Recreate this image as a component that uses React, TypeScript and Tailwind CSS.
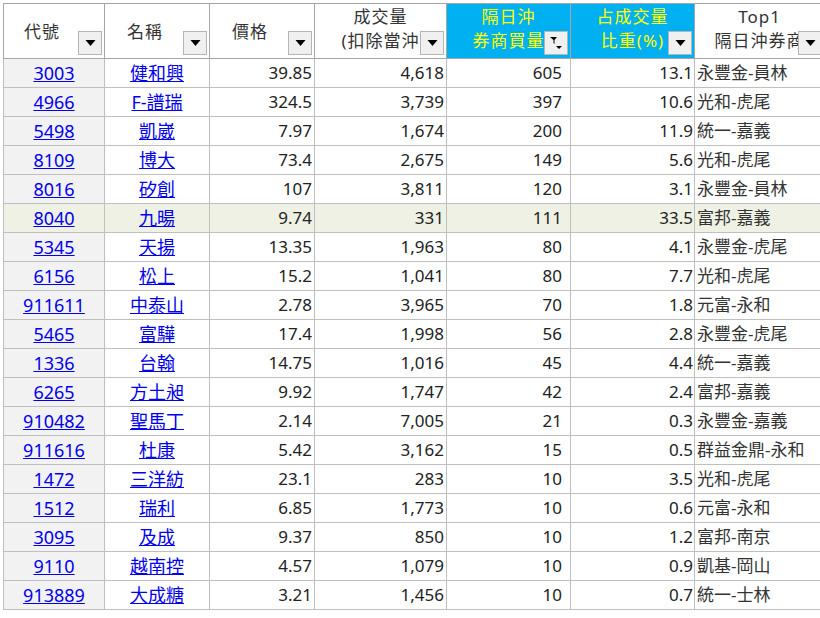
const rows: [string,string,string,string,string,string,string][] = [
["3003","健和興","39.85","4,618","605","13.1","永豐金-員林"],
["4966","F-譜瑞","324.5","3,739","397","10.6","光和-虎尾"],
["5498","凱崴","7.97","1,674","200","11.9","統一-嘉義"],
["8109","博大","73.4","2,675","149","5.6","光和-虎尾"],
["8016","矽創","107","3,811","120","3.1","永豐金-員林"],
["8040","九暘","9.74","331","111","33.5","富邦-嘉義"],
["5345","天揚","13.35","1,963","80","4.1","永豐金-虎尾"],
["6156","松上","15.2","1,041","80","7.7","光和-虎尾"],
["911611","中泰山","2.78","3,965","70","1.8","元富-永和"],
["5465","富驊","17.4","1,998","56","2.8","永豐金-虎尾"],
["1336","台翰","14.75","1,016","45","4.4","統一-嘉義"],
["6265","方土昶","9.92","1,747","42","2.4","富邦-嘉義"],
["910482","聖馬丁","2.14","7,005","21","0.3","永豐金-嘉義"],
["911616","杜康","5.42","3,162","15","0.5","群益金鼎-永和"],
["1472","三洋紡","23.1","283","10","3.5","光和-虎尾"],
["1512","瑞利","6.85","1,773","10","0.6","元富-永和"],
["3095","及成","9.37","850","10","1.2","富邦-南京"],
["9110","越南控","4.57","1,079","10","0.9","凱基-岡山"],
["913889","大成糖","3.21","1,456","10","0.7","統一-士林"],
];

function Drop({ filter }: { filter?: boolean }) {
  return (
    <div className="absolute right-[2px] bottom-[3px] w-[24px] h-[24px] bg-[#f0f0f0] border border-[#b5b5b5] flex items-center justify-center">
      {filter ? (
        <svg width="16" height="16" viewBox="0 0 16 16">
          <path d="M2 2h7L6.5 5v4l-1-1V5z" fill="#000" />
          <path d="M8 11h6l-3 3z" fill="#000" />
        </svg>
      ) : (
        <svg width="13" height="8" viewBox="0 0 12 8"><path d="M1 1h10L6 7z" fill="#000" /></svg>
      )}
    </div>
  );
}

export default function App() {
  const widths = [101, 105, 105, 132, 124, 124, 130];
  const headers: [string, string, boolean, boolean][] = [
    ["代號", "", false, false],
    ["名稱", "", false, false],
    ["價格", "", false, false],
    ["成交量", "(扣除當沖", false, false],
    ["隔日沖", "券商買量", true, true],
    ["占成交量", "比重(%)", true, false],
    ["Top1", "隔日沖券商", false, false],
  ];
  return (
    <div className="w-[820px] h-[618px] bg-white overflow-hidden pt-[3px] pl-[3px]" style={{ fontFamily: '"Noto Sans","Noto Sans CJK TC",sans-serif' }}>
      <table className="border-collapse table-fixed text-[17px] text-[#222]" style={{ width: widths.reduce((a, b) => a + b, 0) }}>
        <colgroup>{widths.map((w, i) => <col key={i} style={{ width: w }} />)}</colgroup>
        <thead>
          <tr className="h-[55px]">
            {headers.map(([a, b, hl, f], i) => (
              <th key={i} className={`relative border border-[#a6a6a6] font-normal align-top overflow-hidden tracking-[1px] ${hl ? "bg-[#00b0f0] text-[#ffff00]" : "bg-white text-[#333]"}`}>
                {b ? (
                  <div className="leading-[24px] pt-[1px] whitespace-nowrap">
                    <div>{a}</div><div>{b}</div>
                  </div>
                ) : (
                  <div className="leading-[24px] pt-[16px] pr-[24px]">{a}</div>
                )}
                <Drop filter={f} />
              </th>
            ))}
          </tr>
        </thead>
        <tbody>
          {rows.map((r, i) => (
            <tr key={i} className={`h-[29px] ${r[0] === "8040" ? "bg-[#eef1e3]" : ""}`}>
              <td className={`border border-[#bfbfbf] text-center text-[18px] ${r[0] === "8040" ? "" : "bg-[#f2f2f2]"}`}><span className="text-[#0000ee] underline">{r[0]}</span></td>
              <td className="border border-[#bfbfbf] text-center text-[18px]"><span className="text-[#0000ee] underline">{r[1]}</span></td>
              <td className="border border-[#bfbfbf] text-right pr-[2px]">{r[2]}</td>
              <td className="border border-[#bfbfbf] text-right pr-[2px]">{r[3]}</td>
              <td className="border border-[#bfbfbf] text-right pr-[8px]">{r[4]}</td>
              <td className="border border-[#bfbfbf] text-right pr-[1px]">{r[5]}</td>
              <td className="border border-[#bfbfbf] text-left pl-[2px] whitespace-nowrap text-[#333]">{r[6]}</td>
            </tr>
          ))}
        </tbody>
      </table>
    </div>
  );
}
